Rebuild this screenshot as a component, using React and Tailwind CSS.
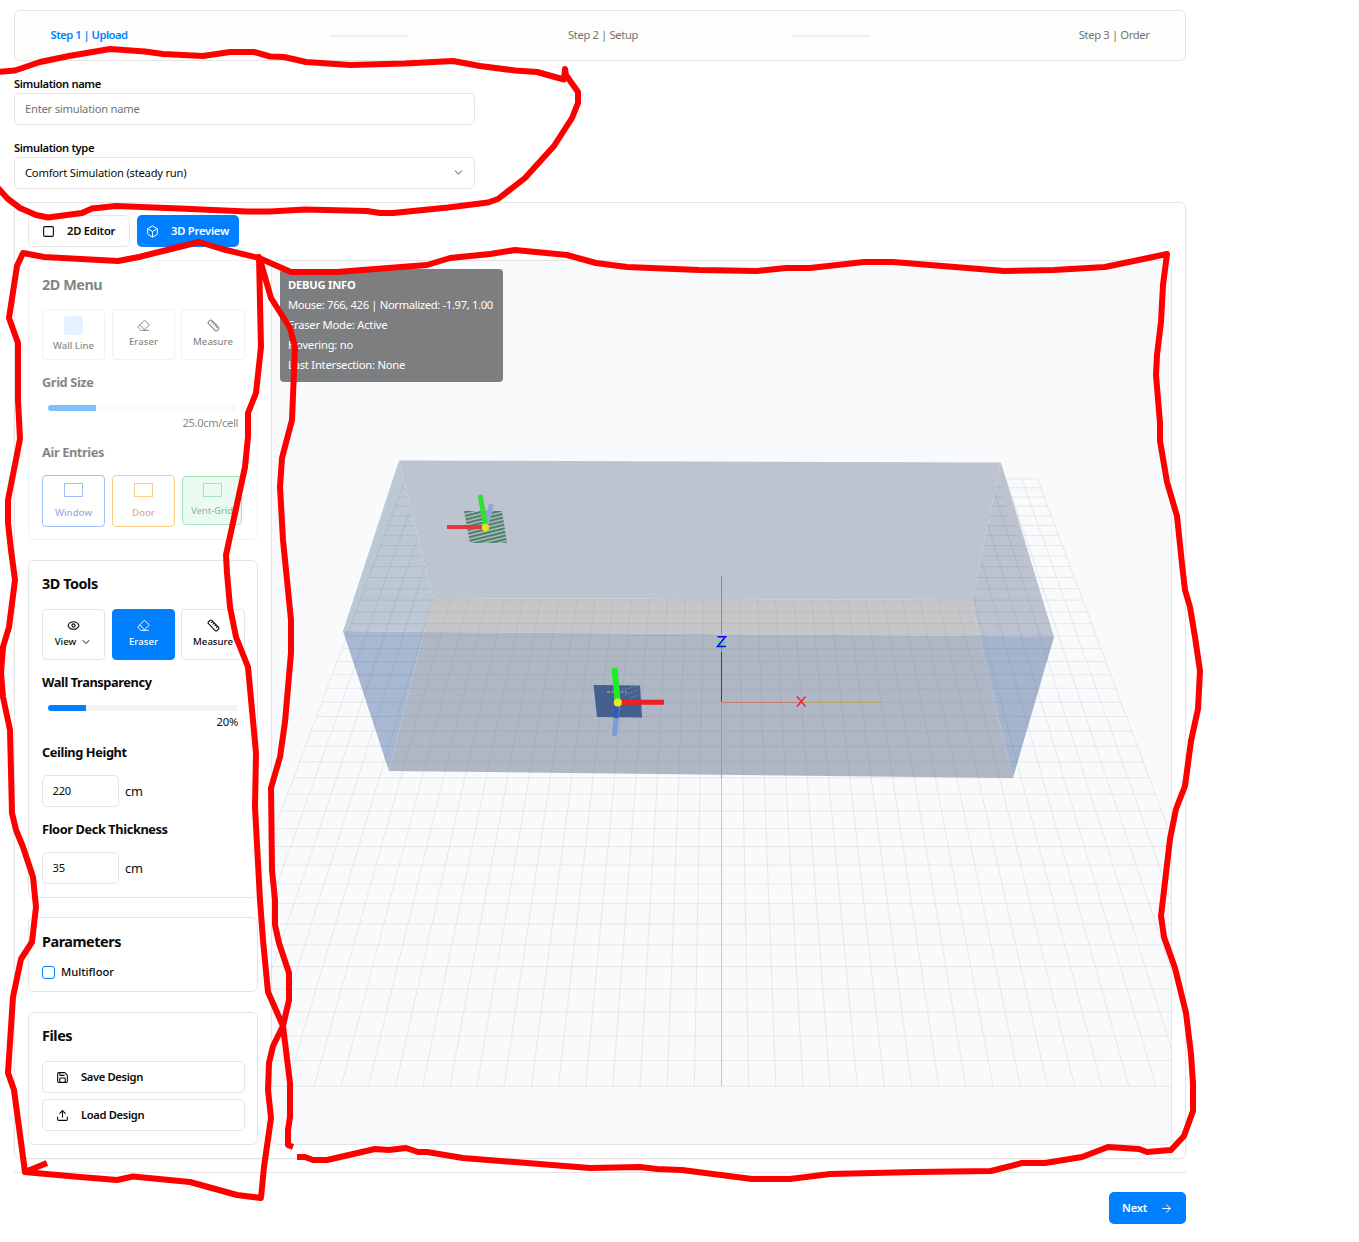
import { Box, Eraser, Ruler, Eye, ChevronDown, Save, Upload, ArrowRight, Square } from "lucide-react";

const GX = 721.5;
const rowY = (k) => 478.9 + (1 / (0.06329 - 0.000662 * k) - 15.8) / 0.018716;
const lines = [];
for (let k = 0; k <= 40; k++) {
  const s = 1 / (0.06329 - 0.000662 * k);
  const y = rowY(k);
  lines.push(`M${(GX - 20 * s).toFixed(1)} ${y.toFixed(1)}H${(GX + 20 * s).toFixed(1)}`);
  lines.push(`M${(GX + (k - 20) * 15.8).toFixed(1)} 478.9L${(GX + (k - 20) * 27.17).toFixed(1)} 1086.7`);
}
const gridPath = lines.join("");

function Scene() {
  return (
    <svg className="block h-full w-full" viewBox="272 261 899 883" preserveAspectRatio="none">
      <defs>
        <clipPath id="sides">
          <path d="M403 478L433 598L389 771L343 631ZM997 478L972 600L1013 778L1054 637Z" />
        </clipPath>
        <clipPath id="floor">
          <path d="M433 598L972 600L1013 778L389 771Z" />
        </clipPath>
        <pattern id="slats" width="6" height="3.6" patternUnits="userSpaceOnUse" patternTransform="rotate(-14)">
          <rect width="6" height="2.3" fill="#4d8069" />
        </pattern>
      </defs>
      <path d={gridPath} stroke="#c9ccd0" strokeOpacity=".4" fill="none" />
      <path d="M721.5 778V1086" stroke="#c4c6ca" />
      <path d="M399 460.500L1001 462.500L972 600L433 598Z" fill="#bec4cf" />
      <path d="M399 460.500L433 598L424 632L343 631Z" fill="#bdc8d5" />
      <path d="M1001 462.500L1054 637L979 636L972 600Z" fill="#bcc2cf" />
      <path d="M433 598L972 600L979 636L424 632Z" fill="#c6c6c8" />
      <path d="M343 631L424 632L389 771Z" fill="#a8b7d2" />
      <path d="M979 636L1054 637L1013 778Z" fill="#a5b4cd" />
      <path d="M424 632L979 636L1013 778L389 771Z" fill="#afb6c4" />
      <path d={gridPath} stroke="#66748c" strokeOpacity=".16" fill="none" clipPath="url(#sides)" />
      <path d={gridPath} stroke="#66748c" strokeOpacity=".1" fill="none" clipPath="url(#floor)" />
      <path d="M464 511L502 511L507 543L470 543Z" fill="url(#slats)" />
      <path d="M486 524L491 506" stroke="#8fa6d6" strokeWidth="5" strokeLinecap="round" />
      <path d="M447 527H485" stroke="#e03a40" strokeWidth="4" />
      <path d="M485.500 525L480 495" stroke="#31df37" strokeWidth="5" />
      <circle cx="485.500" cy="527.500" r="3.700" fill="#e8e31f" />
      <path d="M593.500 685L640 685.500L642 717.500L597 717Z" fill="#456090" />
      <path d="M607 692H627" stroke="#a8b4cc" strokeDasharray="3 1.500" />
      <path d="M622 690L638 686M625 695L639 689M630 698L639 695" stroke="#8292b3" strokeDasharray="1.500 1.500" />
      <path d="M617.500 706L614.500 734" stroke="#7b9cda" strokeWidth="5" strokeLinecap="round" />
      <path d="M616.800 706L615.800 718" stroke="#2f5db5" strokeWidth="5" />
      <path d="M620 702.300H664" stroke="#ee2027" strokeWidth="5" />
      <path d="M617.500 700L614.500 668" stroke="#1eee22" strokeWidth="6" />
      <circle cx="617.800" cy="702.500" r="4" fill="#e9ec22" />
      <path d="M721.500 576V634" stroke="#3fa9d6" />
      <path d="M721.500 652V702" stroke="#1440c8" />
      <path d="M722 702.500H802" stroke="#c37f72" />
      <path d="M802 702.500H882" stroke="#b5a66d" />
      <path d="M721.500 703V778" stroke="#969eac" />
      <path d="M718 642L721.500 646L725 642M721.500 646V652" stroke="#20e048" fill="none" />
      <path d="M717.500 636.700H725.500L717.500 646.500H726" stroke="#0808f0" strokeWidth="1.500" fill="none" />
      <path d="M797 696.500L805.500 706.500M805.500 696.500L797 706.500" stroke="#ea1c20" strokeWidth="1.200" />
    </svg>
  );
}

const marks = [
  "M-2 72L15 70.500L40 62L69 56L110 49L145 51.500L163 54L203 56L230 52L254 52L270 56.500L284 57L306 62L350 65L405 63.500L453 61L480 66L515 70.500L537 72L564 79.500L565 69L566 75L578 92L578 103L572 118L554 146L525 178L498 199L488 202.500L448 207.500L393 213L380 213L367 211L305 209.500L270 211.500L247 211.500L180 208.500L116 206L92 208.500L82 213L48 217.500L36 215L20 208L8 199L-2 188",
  "M47 1163L25 1172L14 1090L8 1073L13 997L21 959L32 942L36 907L33 877L23 847L16 830L12 813L10 730L3 697L1 673L3 647L9 627L15 580L11 550L8 523L8 500L20 439L18 400L18 343L9 318L17 266L23 253L44 257L118 261L139 257L163 251L199 242L222 249L259 258L291 272L337 272L427 265L450 258L490 254L515 250L567 255L596 263L627 267L699 270L757 271L786 268L810 268L864 262L893 262L1004 271L1054 270L1105 267L1167 254L1166 262L1163 285L1161 322L1157 355L1156 375L1160 423L1160 441L1167 482L1177 516L1182 564L1185 590L1190 607L1195 637L1200 671L1198 709L1191 741L1185 786L1176 809L1170 839L1161 916L1164 937L1175 968L1186 1013L1191 1054L1193 1084L1193 1111L1184 1136L1171 1150L1147 1152L1139 1149L1108 1147L1082 1157L1045 1163L1022 1163L991 1171L916 1172L830 1174L790 1179L752 1179L713 1174L682 1170L657 1169L640 1167L590 1168L463 1158L427 1152L418 1152L406 1148L389 1150L375 1149L327 1160L313 1160L305 1157L297 1157",
  "M24 1172L80 1177L117 1180L133 1176.500L190 1182L237 1195L261 1198L264 1167L271 1118L268 1090L269 1063L273 1046L283 1026L268 992L263 940L260 900L255 807L256 753L248 667L236 637L230 607L227 573L226 555L245 467L248 437L248 413L256 393L261 347L259 257L263 270L271 298L290 328L295 347L292 420L282 458L280 487L283 540L291 620L291 653L285 722L280 757L271 788L272 870L275 900L275 925L279 943L289 973L289 1000L283 1026L290 1083L290 1117L288 1130L288 1145L293 1147",
];

function Tool({ children, size = "h-[51px] w-[63px]", className = "" }) {
  return (
    <div className={`flex shrink-0 flex-col items-center justify-center rounded-[4px] border text-[9.6px] font-medium tracking-normal ${size} ${className}`}>
      {children}
    </div>
  );
}

function Slider({ children }) {
  return <div className="ml-1.5 mr-[7px] h-1.5 overflow-hidden rounded-full bg-[#f4f4f2]">{children}</div>;
}

const card = "rounded-[6px] border border-[#e5e5e5] pl-[13px] pr-3";
const h2 = "text-[14.4px] font-bold leading-[22px] tracking-[-0.45px]";
const h3 = "text-[12.8px] font-bold leading-5 tracking-[-0.4px]";
const field = "flex h-8 w-[77px] items-center rounded-[5px] border border-[#e5e5e5] px-[9.5px]";
const fileButton = "flex h-8 items-center gap-3 rounded-[5px] border border-[#e5e5e5] pl-[13px] font-semibold tracking-[-0.35px]";

export default function App() {
  return (
    <div className="relative h-[1242px] w-[1359px] overflow-hidden bg-white font-['Noto_Sans',sans-serif] text-[11.2px] leading-4 tracking-[-0.22px] text-[#0a0a0a]">
      <div className="ml-3.5 w-[1172px] pt-2.5">
        <div className="flex h-[51px] items-center rounded-[6px] border border-[#e5e5e5] bg-[#fdfdfb] px-[35.5px] pb-0.5 text-[#737373]">
          <span className="w-[279px] font-semibold tracking-[-0.5px] text-[#0080ff]">Step 1 | Upload</span>
          <span className="mt-0.5 h-0.5 w-[77px] bg-[#efefee]" />
          <span className="w-[386px] pl-[7px] text-center tracking-[-0.35px]">Step 2 | Setup</span>
          <span className="mt-0.5 h-0.5 w-[77px] bg-[#efefee]" />
          <span className="flex-1 text-right tracking-[-0.35px]">Step 3 | Order</span>
        </div>
        <div className="mt-[15px] w-[461px]">
          <div className="font-semibold tracking-[-0.38px]">Simulation name</div>
          <div className="mt-px flex h-8 items-center rounded-[5px] border border-[#e5e5e5] px-2.5 text-[#737373]">Enter simulation name</div>
          <div className="mt-[15px] font-semibold tracking-[-0.38px]">Simulation type</div>
          <div className="mt-px flex h-8 items-center justify-between rounded-[5px] border border-[#e5e5e5] pl-2.5 pr-[9px]">
            <span>Comfort Simulation (steady run)</span>
            <ChevronDown size={13} strokeWidth={1.9} className="-mt-px text-[#858585]" />
          </div>
        </div>
        <div className="mt-[13px] h-[957px] rounded-[6px] border border-[#e5e5e5] px-[13px] pt-3 shadow-xs">
          <div className="flex gap-[7px] font-semibold">
            <div className="flex h-8 w-[102px] items-center rounded-[5px] border border-[#e5e5e5] pl-[13px]">
              <Square size={13} strokeWidth={2} />
              <span className="ml-3">2D Editor</span>
            </div>
            <div className="flex h-8 w-[102px] items-center rounded-[5px] bg-[#0080ff] pl-[9px] text-white">
              <Box size={13} strokeWidth={1.8} />
              <span className="ml-3">3D Preview</span>
            </div>
          </div>
          <div className="mt-[13px] flex gap-[13px]">
            <div className="w-[230px] shrink-0">
              <div className={`${card} h-[280px] pt-[13px] opacity-50`}>
                <h2 className={h2}>2D Menu</h2>
                <div className="mt-[13px] flex gap-[7px]">
                  <Tool className="border-[#e5e5e5]"><span className="mb-[3px] mt-px h-[19px] w-[19px] rounded-[3px] bg-[#cce6ff]" />Wall Line</Tool>
                  <Tool className="border-[#e5e5e5]"><Eraser size={13} strokeWidth={1.8} className="mb-0.5" />Eraser</Tool>
                  <Tool size="h-[51px] w-[64px]" className="-ml-px border-[#e5e5e5]"><Ruler size={13} strokeWidth={2} className="mb-0.5" />Measure</Tool>
                </div>
                <h3 className={`${h3} mt-3`}>Grid Size</h3>
                <div className="mt-[13px]"><Slider><div className="h-full w-1/4 bg-[#0080ff]" /></Slider></div>
                <div className="mr-[7px] mt-1 text-right tracking-[-0.38px]">25.0cm/cell</div>
                <h3 className={`${h3} mt-[11px]`}>Air Entries</h3>
                <div className="mt-[13px] flex gap-[7px]">
                  <Tool size="h-[52px] w-[63px]" className="border-[#3b82f6] text-[#2b54e0]"><span className="mb-2 mt-px h-3.5 w-[19px] border border-[#3b82f6]" />Window</Tool>
                  <Tool size="h-[52px] w-[63px]" className="border-[#f59e0b] text-[#c2570c]"><span className="mb-2 mt-px h-3.5 w-[19px] border border-[#f59e0b]" />Door</Tool>
                  <Tool size="h-[49px] w-[60px]" className="mt-px border-[#4bca7d] bg-[#dbf8e6] text-[#15803d]"><span className="mb-1.5 h-3.5 w-[19px] border border-[#4bca7d]" /><span className="tracking-[-0.15px]">Vent-Grid</span></Tool>
                </div>
              </div>
              <div className={`${card} mt-5 h-[338px] pt-3`}>
                <h2 className={h2}>3D Tools</h2>
                <div className="mt-3.5 flex gap-[7px]">
                  <Tool className="border-[#e5e5e5]"><Eye size={13} className="mb-0.5" /><span className="flex items-center gap-1">View <ChevronDown size={12} /></span></Tool>
                  <Tool className="border-[#0080ff] bg-[#0080ff] text-white"><Eraser size={13} strokeWidth={1.8} className="mb-0.5" />Eraser</Tool>
                  <Tool size="h-[51px] w-[64px]" className="-ml-px border-[#e5e5e5]"><Ruler size={13} strokeWidth={2} className="mb-0.5" />Measure</Tool>
                </div>
                <h3 className={`${h3} mt-3`}>Wall Transparency</h3>
                <div className="mt-[13px]"><Slider><div className="h-full w-1/5 bg-[#0080ff]" /></Slider></div>
                <div className="mr-[7px] mt-[3px] text-right">20%</div>
                <h3 className={`${h3} mt-3`}>Ceiling Height</h3>
                <div className="mt-[13px] flex items-center gap-1.5"><div className={field}>220</div><span className="pb-px text-[12.8px]">cm</span></div>
                <h3 className={`${h3} mt-3`}>Floor Deck Thickness</h3>
                <div className="mt-[13px] flex items-center gap-1.5"><div className={field}>35</div><span className="pb-px text-[12.8px]">cm</span></div>
              </div>
              <div className={`${card} mt-[19px] h-[75px] pt-[13px]`}>
                <h2 className={h2}>Parameters</h2>
                <div className="mt-[11px] flex items-center gap-1.5 font-medium tracking-normal"><span className="h-[13px] w-[13px] rounded-[3px] border border-[#0080ff]" />Multifloor</div>
              </div>
              <div className={`${card} mt-5 h-[133px] pt-3`}>
                <h2 className={h2}>Files</h2>
                <div className={`${fileButton} mt-3.5`}><Save size={13} />Save Design</div>
                <div className={`${fileButton} mt-1.5`}><Upload size={13} />Load Design</div>
              </div>
            </div>
            <div className="relative h-[885px] w-[901px] shrink-0 overflow-hidden rounded-[6px] border border-[#e5e5e5] bg-[#f9fafc]">
              <Scene />
              <div className="absolute left-2 top-2 h-[113px] w-[223px] whitespace-nowrap rounded-[4px] bg-[#7d7e80] px-2 pt-1.5 leading-5 text-white">
                <div className="font-bold">DEBUG INFO</div>
                <div className="tracking-[-0.33px]">Mouse: 766, 426 | Normalized: -1.97, 1.00</div>
                <div>Eraser Mode: Active</div>
                <div>Hovering: no</div>
                <div>Last Intersection: None</div>
              </div>
            </div>
          </div>
        </div>
        <div className="mt-[13px] flex justify-end border-t border-[#e5e5e5] pt-[19px]">
          <div className="flex h-8 w-[77px] items-center justify-between rounded-[5px] bg-[#0080ff] px-[13px] font-semibold text-white">Next<ArrowRight size={13} strokeWidth={1.8} /></div>
        </div>
      </div>
      <svg className="pointer-events-none absolute inset-0" width="1359" height="1242" fill="none" stroke="#fd0000" strokeWidth="6" strokeLinejoin="round">
        {marks.map((d) => <path key={d} d={d} />)}
      </svg>
    </div>
  );
}
